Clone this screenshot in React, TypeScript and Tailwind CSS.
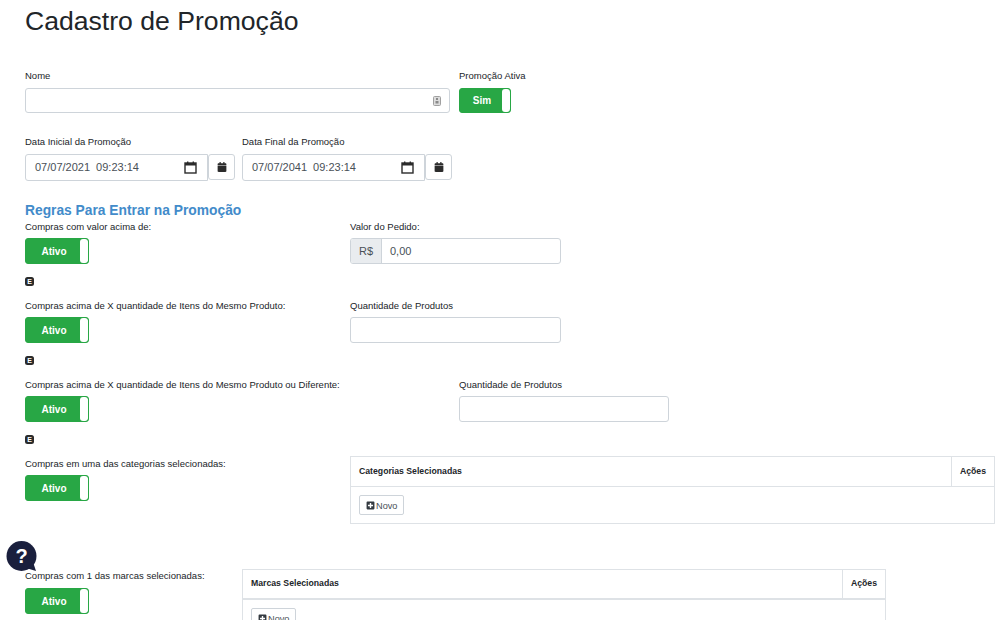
import React from "react";
import { FaCalendar, FaPlusSquare } from "react-icons/fa";

function Toggle({ text = "Ativo", w = "w-[64px]", h = "h-[26px]" }: { text?: string; w?: string; h?: string }) {
  return (
    <div className={`${w} ${h} flex rounded-[3px] border border-[#28a745] bg-[#28a745] overflow-hidden`}>
      <div className="flex-1 flex items-center justify-center pl-[2px] text-white font-bold text-[10px]">{text}</div>
      <div className="w-[8px] bg-white rounded-[3px]" />
    </div>
  );
}

function Label({ children }: { children: React.ReactNode }) {
  return <div className="h-[13px] leading-[13px] text-[9.5px] text-[#212529] whitespace-nowrap">{children}</div>;
}

function Badge() {
  return (
    <div className="w-[9px] h-[9px] rounded-[2.5px] bg-[#2b2b2b] flex items-center justify-center text-white font-bold text-[7px] leading-none">
      E
    </div>
  );
}

function CalIcon() {
  return (
    <svg width="13" height="13" viewBox="0 0 13 13" className="shrink-0">
      <rect x="1" y="2" width="11" height="10" fill="none" stroke="#2b2b2b" strokeWidth="1.4" />
      <rect x="1" y="2" width="11" height="2.5" fill="#2b2b2b" />
      <rect x="3" y="0.5" width="1.4" height="2" fill="#2b2b2b" />
      <rect x="8.6" y="0.5" width="1.4" height="2" fill="#2b2b2b" />
    </svg>
  );
}

function DateField({ label, value }: { label: string; value: string }) {
  return (
    <div className="w-[217px] shrink-0">
      <Label>{label}</Label>
      <div className="flex mt-[6px]">
        <div className="w-[183px] h-[27px] flex items-center justify-between pl-[9px] pr-[10px] border border-[#ced4da] rounded-l-[3px] text-[11px] text-[#495057] [word-spacing:3px]">
          <span>{value}</span>
          <CalIcon />
        </div>
        <div className="w-[27px] h-[26px] flex items-center justify-center border border-[#ced4da] rounded-[3px] text-[#2b2b2b]">
          <FaCalendar size={10} />
        </div>
      </div>
    </div>
  );
}

function Rule({ label, leftW, right }: { label: string; leftW: string; right: React.ReactNode }) {
  return (
    <div className="flex">
      <div className={`${leftW} shrink-0`}>
        <Label>{label}</Label>
        <div className="mt-[5px]">
          <Toggle />
        </div>
      </div>
      {right}
    </div>
  );
}

function Field({ label, children, w = "w-[211px]" }: { label: string; children?: React.ReactNode; w?: string }) {
  return (
    <div className={w}>
      <Label>{label}</Label>
      <div className="mt-[5px] h-[26px] flex border border-[#ced4da] rounded-[3px] overflow-hidden">{children}</div>
    </div>
  );
}

function SelTable({ title, w, thick }: { title: string; w: string; thick?: boolean }) {
  return (
    <div className={`${w} shrink-0 border border-[#dee2e6] text-[8.7px] text-[#212529]`}>
      <div className={`flex h-[30px] border-b-[#dee2e6] font-bold ${thick ? "border-b-[2px]" : "border-b"}`}>
        <div className="flex-1 flex items-center pl-[8px]">{title}</div>
        <div className="w-[43px] flex items-center justify-center border-l border-[#dee2e6]">Ações</div>
      </div>
      <div className="pt-[8px] pl-[8px] pb-[8px]">
        <div className="inline-flex items-center gap-[1px] h-[20px] px-[6px] border border-[#ced4da] rounded-[2px] text-[9.2px] leading-[20px] text-[#495057]">
          <FaPlusSquare size={9} className="text-[#343a40]" />
          <span className="pt-[1px]">Novo</span>
        </div>
      </div>
    </div>
  );
}

export default function App() {
  return (
    <div className="relative h-[620px] w-[1005px] overflow-hidden bg-white pl-[25px] pr-[10px] font-['Liberation_Sans',Arial,sans-serif]">
      <h1 className="pt-[5px] h-[69px] text-[26.6px] leading-[32px] text-[#212529] font-normal">Cadastro de Promoção</h1>

      <div className="flex gap-[9px]">
        <div className="w-[425px]">
          <Label>Nome</Label>
          <div className="mt-[6px] h-[25px] flex items-center justify-end pr-[8px] border border-[#ced4da] rounded-[3px]">
            <svg width="8" height="10" viewBox="0 0 8 10">
              <rect x="0.5" y="0.5" width="7" height="9" rx="1" fill="#dcdcdc" stroke="#a0a0a0" />
              <rect x="3" y="2" width="2" height="2" fill="#8a8a8a" />
              <rect x="2.5" y="5" width="3" height="2.5" fill="#8a8a8a" />
            </svg>
          </div>
        </div>
        <div>
          <Label>Promoção Ativa</Label>
          <div className="mt-[6px]">
            <Toggle text="Sim" w="w-[52px]" h="h-[25px]" />
          </div>
        </div>
      </div>

      <div className="flex mt-[22px]">
        <DateField label="Data Inicial da Promoção" value="07/07/2021 09:23:14" />
        <DateField label="Data Final da Promoção" value="07/07/2041 09:23:14" />
      </div>

      <h2 className="mt-[21px] h-[17px] leading-[17px] text-[13.8px] font-bold text-[#428bca]">Regras Para Entrar na Promoção</h2>

      <div className="mt-[1px]">
        <Rule
          label="Compras com valor acima de:"
          leftW="w-[325px]"
          right={
            <Field label="Valor do Pedido:">
              <div className="w-[31px] bg-[#e9ecef] border-r border-[#ced4da] flex items-center justify-center text-[11px] text-[#495057]">R$</div>
              <div className="flex-1 flex items-center pl-[8px] text-[11px] text-[#495057]">0,00</div>
            </Field>
          }
        />
      </div>
      <div className="mt-[13px]"><Badge /></div>

      <div className="mt-[13px]">
        <Rule label="Compras acima de X quantidade de Itens do Mesmo Produto:" leftW="w-[325px]" right={<Field label="Quantidade de Produtos" />} />
      </div>
      <div className="mt-[13px]"><Badge /></div>

      <div className="mt-[13px]">
        <Rule label="Compras acima de X quantidade de Itens do Mesmo Produto ou Diferente:" leftW="w-[434px]" right={<Field w="w-[210px]" label="Quantidade de Produtos" />} />
      </div>
      <div className="mt-[13px]"><Badge /></div>

      <div className="mt-[13px] flex">
        <div className="w-[325px] shrink-0">
          <Label>Compras em uma das categorias selecionadas:</Label>
          <div className="mt-[5px]"><Toggle /></div>
        </div>
        <div className="-mt-[1px]"><SelTable title="Categorias Selecionadas" w="w-[645px]" /></div>
      </div>

      <div className="mt-[45px] flex">
        <div className="w-[217px] shrink-0">
          <Label>Compras com 1 das marcas selecionadas:</Label>
          <div className="mt-[6px]"><Toggle /></div>
        </div>
        <SelTable title="Marcas Selecionadas" w="w-[644px]" thick />
      </div>

      <div className="absolute left-[6px] top-[541px] w-[31px] h-[31px]">
        <svg width="31" height="33" viewBox="0 0 31 33" className="absolute inset-0">
          <circle cx="15.5" cy="15" r="15" fill="#1a1f3d" />
          <path d="M20 27 L30 30 L27 21 Z" fill="#1a1f3d" />
        </svg>
        <div className="absolute inset-0 -top-[1px] flex items-center justify-center text-white font-bold text-[20px] leading-none">?</div>
      </div>
    </div>
  );
}
